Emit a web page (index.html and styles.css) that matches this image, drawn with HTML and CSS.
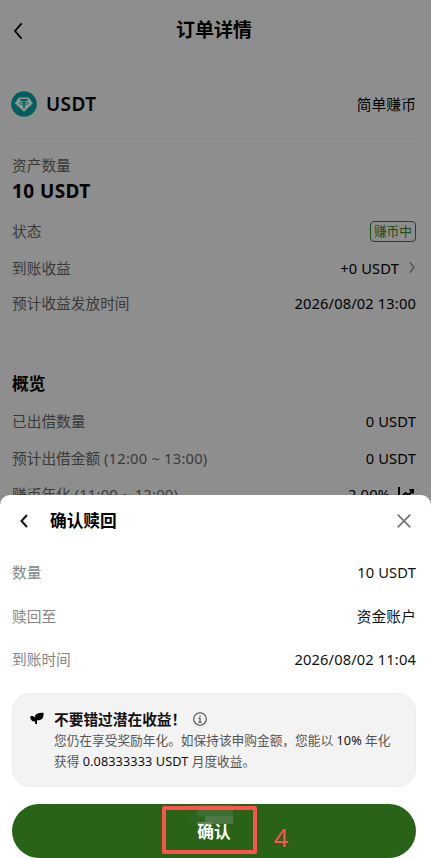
FILE: index.html
```html
<!DOCTYPE html>
<html lang="zh-CN">
<head>
<meta charset="utf-8">
<meta name="viewport" content="width=device-width, initial-scale=1">
<title>订单详情</title>
<link rel="stylesheet" href="styles.css">
</head>
<body>
<div class="screen">
  <main class="page">
    <header class="nav">
      <svg class="nav-back" viewBox="0 0 10 18"><path d="M8.600 1.300 2 9l6.600 7.700"/></svg>
      <h1>订单详情</h1>
    </header>
    <section class="asset">
      <svg class="coin" viewBox="0 0 26 26"><circle cx="13" cy="13" r="12.800" fill="#005f5d"/><path d="M7.800 6.600h10l4 5.600L13 20.800l-9.200-8.600z" fill="#8f9696"/><path d="M9.200 8.900h7.600M13 8.900v8.300" stroke="#005f5d" stroke-width="1.700" fill="none"/><ellipse cx="13" cy="12.300" rx="4.600" ry="1.100" stroke="#005f5d" stroke-width=".8" fill="none"/></svg>
      <strong>USDT</strong>
      <span class="value">简单赚币</span>
    </section>
    <section class="amount">
      <span class="label">资产数量</span>
      <strong>10 USDT</strong>
    </section>
    <section class="rows">
      <div class="row status"><span class="label">状态</span><span class="tag">赚币中</span></div>
      <div class="row income"><span class="label">到账收益</span><span class="value">+0 USDT</span><svg class="chevron" viewBox="0 0 6 11"><path d="M.8.200 5 5.500.8 10.800"/></svg></div>
      <div class="row payout"><span class="label">预计收益发放时间</span><span class="value">2026/08/02 13:00</span></div>
    </section>
    <section class="overview">
      <h2>概览</h2>
      <div class="row"><span class="label">已出借数量</span><span class="value">0 USDT</span></div>
      <div class="row"><span class="label">预计出借金额 <span class="range">(12:00 ~ 13:00)</span></span><span class="value">0 USDT</span></div>
      <div class="row"><span class="label">赚币年化 <span class="range">(11:00 ~ 12:00)</span></span><span class="value">2.00%</span><svg class="chart" viewBox="0 0 17 14"><path d="M1 0v12.500h15M3.500 10l4-4 3 2L15 3.500M11.500 3H15v3.500"/></svg></div>
    </section>
  </main>
  <section class="sheet">
    <header class="sheet-head">
      <svg class="sheet-back" viewBox="0 0 8 14"><path d="M7 1 1.500 7 7 13"/></svg>
      <h2>确认赎回</h2>
      <svg class="close" viewBox="0 0 14 14"><path d="m.7.700 12.600 12.600M13.300.7.700 13.300"/></svg>
    </header>
    <div class="row"><span class="label">数量</span><span class="value">10 USDT</span></div>
    <div class="row"><span class="label">赎回至</span><span class="value">资金账户</span></div>
    <div class="row"><span class="label">到账时间</span><span class="value">2026/08/02 11:04</span></div>
    <aside class="notice">
      <svg class="sprout" viewBox="0 0 14 13"><path d="M4.800 5.800C4.800 2.500 7 .8 13.500.8 14 6 12 8.500 7 8.300V12H5.200V9.500C2 9.600.3 8 .3 4.200 2.500 3.700 4.200 4.300 4.800 5.800z"/></svg>
      <div class="notice-body">
        <div class="notice-title"><h3>不要错过潜在收益！</h3><svg class="info" viewBox="0 0 14 14"><circle cx="7" cy="7" r="6.300"/><path d="M5.500 6H7v4M5.300 10.200h3.400M7 3.300v1.300"/></svg></div>
        <p>您仍在享受奖励年化。如保持该申购金额，您能以 <b>10%</b> 年化</p>
        <p>获得 <b>0.08333333 USDT</b> 月度收益。</p>
      </div>
    </aside>
    <div class="action">
      <button class="confirm">确认</button>
      <svg class="mosaic" viewBox="0 0 60 22"><path fill="#2d651f" d="M4 8h17v10H4z"/><path fill="#3b7030" d="M13 1h36v11H13z"/><path fill="#4d7844" d="M21 12h28v8H21z"/><path fill="#66885f" d="M13 18h15v2H13z"/></svg>
      <div class="highlight"></div>
      <span class="step">4</span>
    </div>
  </section>
</div>
</body>
</html>
```
FILE: styles.css
```css
* { box-sizing: border-box; }
body { margin: 0; font-family: "Noto Sans", "Noto Sans CJK SC", sans-serif; font-size: 14.7px; line-height: 22px; color: #000; }
h1, h2, h3, p { margin: 0; }
svg { display: block; flex: none; fill: none; stroke: currentColor; overflow: visible; }
.screen { position: relative; height: 858px; overflow: hidden; background: #8e8e8e; }
.page { padding: 0 15px 0 12px; }
.row { display: flex; align-items: center; height: 37px; white-space: nowrap; }
.label { color: #3a3a3a; }
.range { letter-spacing: .24px; }
.value { margin-left: auto; letter-spacing: .13px; }

.nav { display: flex; align-items: center; height: 60px; }
.nav-back { width: 10px; height: 18px; stroke-width: 1.8; margin: 2px 0 0 1px; }
.nav h1 { margin-left: 153px; font-size: 19px; font-weight: 600; line-height: 28px; }
.asset { display: flex; align-items: center; height: 79px; padding-top: 10px; border-bottom: 1px solid #878787; }
.coin { width: 26px; height: 26px; margin-left: -1px; stroke: none; }
.asset strong { margin-left: 9px; font-size: 19px; font-weight: 600; letter-spacing: .4px; }
.amount { display: flex; flex-direction: column; padding-top: 15px; }
.amount strong { font-size: 19px; line-height: 30px; font-weight: 700; letter-spacing: .4px; }
.rows { padding-top: 7px; }
.status { height: 36px; }
.payout { height: 34px; }
.tag { margin-left: auto; height: 21px; padding: 0 3px; border: 1px solid #174e10; border-radius: 4px; color: #174e10; font-size: 12.7px; line-height: 19px; }
.chevron { width: 6px; height: 11px; margin: 0 1px 0 10px; color: #555; stroke-width: 1.4; }
.overview { padding-top: 50px; }
.overview h2 { margin-bottom: 4px; font-size: 16.7px; font-weight: 600; line-height: 28px; }
.chart { width: 17px; height: 14px; margin: 0 1px 0 8px; stroke-width: 2; }
.overview .row:nth-of-type(3) { height: 35px; }

.sheet { position: absolute; inset: 495px 0 0; padding: 0 15px 0 12px; border-radius: 10px 10px 0 0; background: #fff; color: #111; }
.sheet-head { display: flex; align-items: center; height: 51px; padding: 0 5px 0 8px; margin-bottom: 9px; }
.sheet-back { width: 8px; height: 14px; stroke-width: 2; }
.sheet-head h2 { margin-left: 22px; font-size: 16.7px; font-weight: 600; color: #000; }
.close { width: 14px; height: 14px; margin-left: auto; color: #777; stroke-width: 1.8; }
.sheet .row { height: 43.5px; padding-bottom: 9px; }
.sheet .label { color: #858585; }
.notice { display: flex; height: 94px; margin-top: 7px; padding: 15px 17px; border: 1px solid #ededed; border-radius: 18px; background: #f3f3f3; }
.sprout { width: 14px; height: 13px; margin: 3px 10px 0 0; fill: #000; stroke: none; }
.notice-body { color: #555; font-size: 12.7px; line-height: 21px; white-space: nowrap; }
.notice-title { display: flex; align-items: center; height: 21px; color: #111; }
.notice h3 { font-size: 14.7px; font-weight: 600; }
.info { width: 14px; height: 14px; margin-left: 7px; color: #444; stroke-width: 1.1; }
.notice b { color: #111; font-weight: 400; letter-spacing: .1px; }
.action { position: relative; margin-top: 17px; }
.confirm { display: block; width: 100%; height: 54px; padding: 0; border: 0; border-radius: 27px; background: #286318; color: #fff; font: 600 16.7px/55px "Noto Sans", "Noto Sans CJK SC", sans-serif; }
.mosaic { position: absolute; left: 172px; top: 0; width: 60px; height: 22px; stroke: none; }
.highlight { position: absolute; left: 150px; top: 2px; width: 95px; height: 48px; border: 4px solid #ff514d; border-radius: 2px; }
.step { position: absolute; left: 262px; top: 19px; color: #ff514d; font: 25px/28px "Noto Sans", sans-serif; }
```
